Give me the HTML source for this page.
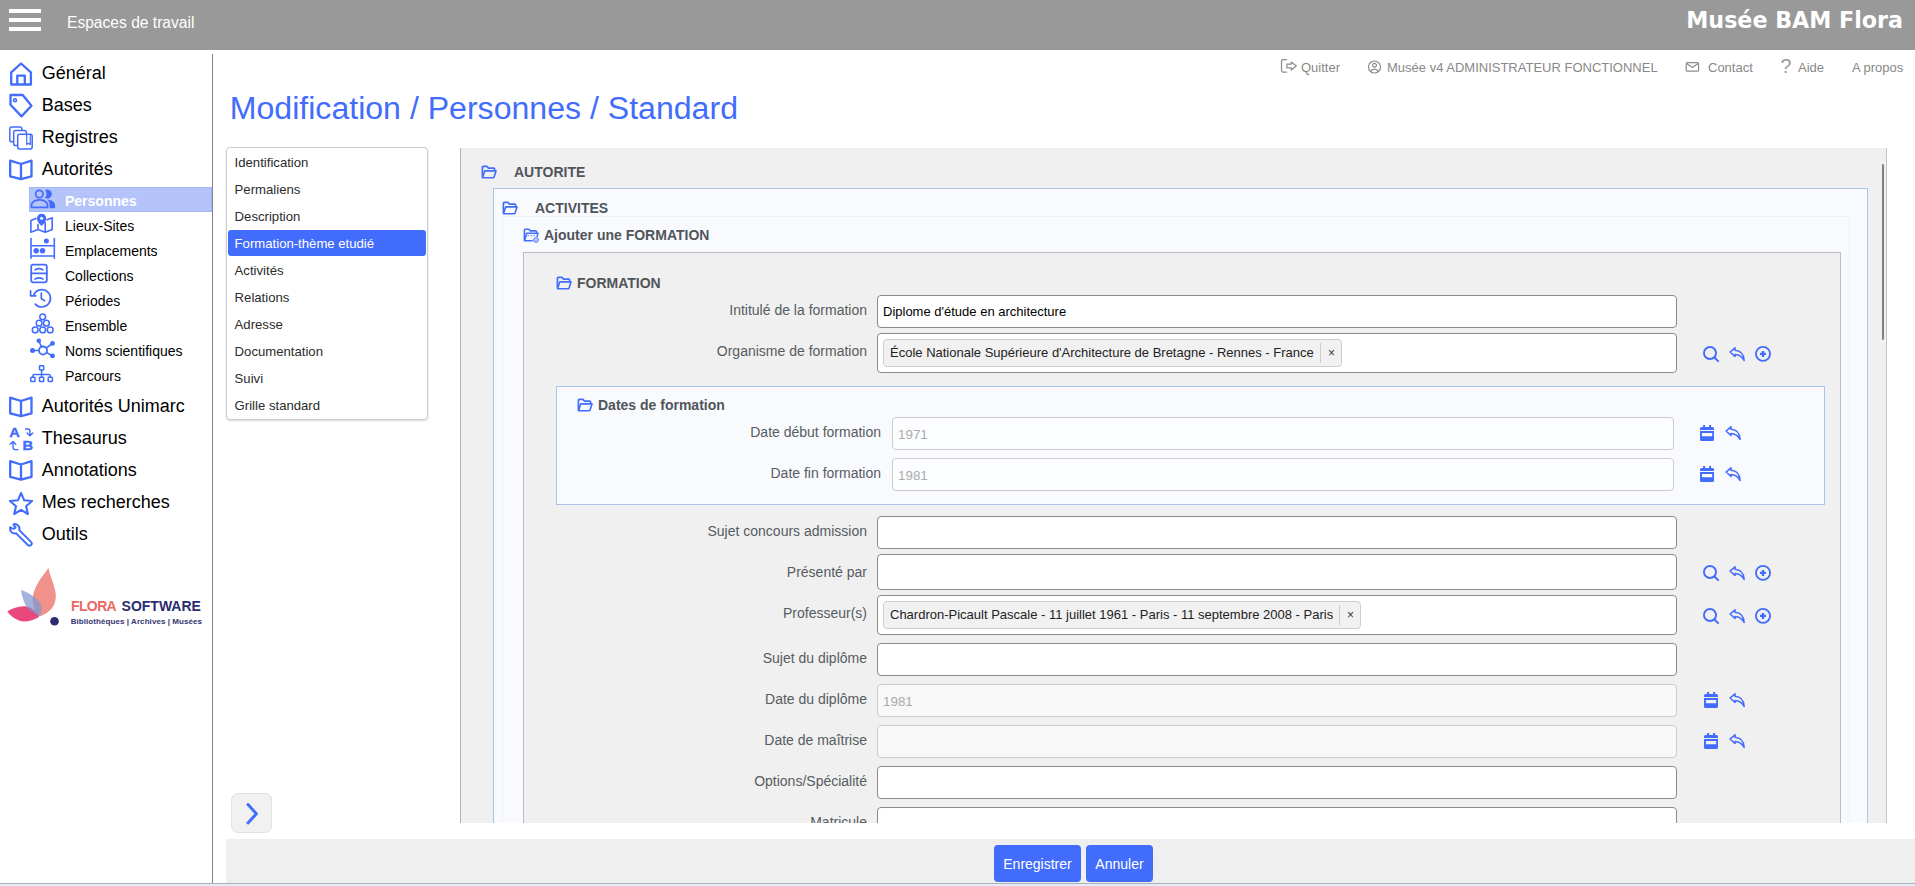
<!DOCTYPE html>
<html lang="fr"><head><meta charset="utf-8"><title>Modification / Personnes / Standard</title>
<style>
*{box-sizing:border-box}
html,body{margin:0;padding:0}
body{width:1915px;height:886px;position:relative;overflow:hidden;background:#fff;font-family:"Liberation Sans",sans-serif;color:#000}
.a{position:absolute;white-space:nowrap}
.ic{position:absolute;color:#426cfb;overflow:visible}
#top{left:0;top:0;width:1915px;height:49.5px;background:#999}
.hb{left:9px;width:32px;height:4px;background:#fff}
.m1{left:41.7px;font-size:18px;line-height:20px}
.m2{left:65px;font-size:14px;line-height:16px}
.hl{font-size:13px;line-height:16px;color:#888;top:60px}
.nv{left:234.600px;font-size:13.150px;line-height:16px;color:#2b2b2b}
.box{position:absolute;border:1px solid}
.h{font-weight:700;font-size:14px;line-height:16px;color:#50555a}
.lb{font-size:14px;line-height:16px;color:#565c62;text-align:right;width:300px}
.in{position:absolute;left:877px;width:800px;height:33px;border:1px solid #8a8a8a;border-radius:4px;background:#fff}
.din{position:absolute;height:33px;border:1px solid #ccc;border-radius:4px;background:rgba(255,255,255,.5)}
.tag{position:absolute;height:28px;border:1px solid #ccc;border-radius:4px;background:#f1f1f1;font-size:13px;line-height:26px;color:#222;white-space:nowrap}
.btn{position:absolute;top:845px;height:37px;background:#426cfb;color:#fff;border-radius:4px;font-size:14px;line-height:39px;text-align:center}
</style></head>
<body>
<div id="top" class="a"></div>
<div class="a hb" style="top:9px"></div>
<div class="a hb" style="top:18px"></div>
<div class="a hb" style="top:27px"></div>
<div class="a" style="left:67px;top:12.500px;font-size:15.600px;line-height:20px;color:#fff">Espaces de travail</div>
<div class="a" style="right:12px;top:6px;font-family:'DejaVu Sans',sans-serif;font-weight:700;font-size:22.200px;line-height:28px;color:#fff">Musée BAM Flora</div>
<div class="a" style="left:212px;top:54px;width:1px;height:829px;background:#858585"></div>
<div class="a m1" style="top:63px">Général</div>
<div class="a m1" style="top:95px">Bases</div>
<div class="a m1" style="top:127px">Registres</div>
<div class="a m1" style="top:159px">Autorités</div>
<div class="a m1" style="top:396px">Autorités Unimarc</div>
<div class="a m1" style="top:428px">Thesaurus</div>
<div class="a m1" style="top:460px">Annotations</div>
<div class="a m1" style="top:492px">Mes recherches</div>
<div class="a m1" style="top:524px">Outils</div>
<div class="a" style="left:29px;top:187px;width:183px;height:25px;background:#b4c4fb;border:1px solid #a3b6fa"></div>
<div class="a m2" style="top:193px;color:#fff;font-weight:700;">Personnes</div>
<div class="a m2" style="top:218px;">Lieux-Sites</div>
<div class="a m2" style="top:243px;">Emplacements</div>
<div class="a m2" style="top:268px;">Collections</div>
<div class="a m2" style="top:293px;">Périodes</div>
<div class="a m2" style="top:318px;">Ensemble</div>
<div class="a m2" style="top:343px;">Noms scientifiques</div>
<div class="a m2" style="top:368px;">Parcours</div>
<svg class="a" style="left:0;top:0" width="212" height="640" viewBox="0 0 212 640"><path d="M11.2 84.5V72.3L21 63.5L30.9 72.3V84.5Z M17.3 84.5V75.6H24.8V84.5" fill="none" stroke="#426cfb" stroke-linecap="round" stroke-linejoin="round" stroke-width="2.3"/><path d="M10.500 95H22.700L31.500 105.800L21.500 116.400L10.500 104.800Z" fill="none" stroke="#426cfb" stroke-linecap="round" stroke-linejoin="round" stroke-width="2.300"/><circle cx="15" cy="100.200" r="1.500" fill="none" stroke="#426cfb" stroke-linecap="round" stroke-linejoin="round" stroke-width="1.600"/><rect x="9.8" y="127" width="12" height="14.8" rx="1.8" fill="#fff" stroke="#426cfb" stroke-width="1.5"/><rect x="13.7" y="130.4" width="12.7" height="15.1" rx="1.8" fill="#fff" stroke="#426cfb" stroke-width="1.5"/><rect x="17.7" y="134.3" width="14.5" height="14.6" rx="1.8" fill="#fff" stroke="#426cfb" stroke-width="1.5"/><path d="M26.7 134.6V144.6L28.5 143.2L30.3 144.6V134.6" fill="none" stroke="#426cfb" stroke-linecap="round" stroke-linejoin="round" stroke-width="1.2"/><path d="M10.2 160.6L21 164.0L31.5 160.6V176.4L21 179.2L10.2 176.4Z M21 164.0V179.2" fill="none" stroke="#426cfb" stroke-linecap="round" stroke-linejoin="round" stroke-width="2.3"/><path d="M10.2 397.6L21 401.0L31.5 397.6V413.4L21 416.2L10.2 413.4Z M21 401.0V416.2" fill="none" stroke="#426cfb" stroke-linecap="round" stroke-linejoin="round" stroke-width="2.3"/><path d="M10.2 461.1L21 464.5L31.5 461.1V476.9L21 479.7L10.2 476.9Z M21 464.5V479.7" fill="none" stroke="#426cfb" stroke-linecap="round" stroke-linejoin="round" stroke-width="2.3"/><circle cx="39.3" cy="194" r="3.7" fill="none" stroke="#426cfb" stroke-linecap="round" stroke-linejoin="round" stroke-width="1.7"/><path d="M45 190.300A4.400 4.400 0 1 1 45 197.700A5.600 5.600 0 0 0 45 190.300Z" fill="#426cfb"/><path d="M31.4 207.4V205.6C31.4 201.6 36 199.9 39.5 199.9C43 199.9 47.6 201.6 47.6 205.6V207.4Z" fill="none" stroke="#426cfb" stroke-linecap="round" stroke-linejoin="round" stroke-width="1.7"/><path d="M47.3 199.4C52 199.8 55.1 202 55.1 205.4V208.3H49.6V205.4C49.6 203 48.9 201 47.3 199.4Z" fill="#426cfb"/><path d="M36 218.4L30.9 220.4V232.2L38 229.5L45.2 232.2L52.2 229.5V217.7L47 219.7 M38 224.5V229.5 M45.2 222.5V232.2" fill="none" stroke="#426cfb" stroke-linecap="round" stroke-linejoin="round" stroke-width="1.6"/><path d="M41.6 226C38 222.6 37 220.6 37 218.3a4.600 4.600 0 0 1 9.200 0C46.200 220.600 45.200 222.600 41.600 226Z" fill="#426cfb"/><circle cx="41.6" cy="218.2" r="1.5" fill="#fff"/><path d="M31 238.6V258.2 M54.3 238.6V258.2 M31 245.7H54.3 M31 256H54.3" fill="none" stroke="#426cfb" stroke-linecap="round" stroke-linejoin="round" stroke-width="1.6"/><circle cx="46.4" cy="240.9" r="2.5" fill="#426cfb"/><circle cx="36.2" cy="250.8" r="2.7" fill="#426cfb"/><circle cx="42.5" cy="250.8" r="2.7" fill="#426cfb"/><rect x="31.2" y="264.6" width="15.6" height="17.7" rx="2" fill="none" stroke="#426cfb" stroke-linecap="round" stroke-linejoin="round" stroke-width="1.8"/><path d="M31.2 273.4H46.8 M35 269.9Q39 267.300 43 269.9 M35 279.1Q39 276.500 43 279.1" fill="none" stroke="#426cfb" stroke-linecap="round" stroke-linejoin="round" stroke-width="1.7"/><path d="M33.6 295.3A8.7 8.7 0 1 1 35.3 304.1 M30.6 290.8V295.8H35.8 M41.3 293.2V298.7L44.7 300.7" fill="none" stroke="#426cfb" stroke-linecap="round" stroke-linejoin="round" stroke-width="1.7"/><circle cx="42.7" cy="316.8" r="2.9" fill="none" stroke="#426cfb" stroke-linecap="round" stroke-linejoin="round" stroke-width="1.5"/><circle cx="39.1" cy="323.2" r="2.9" fill="none" stroke="#426cfb" stroke-linecap="round" stroke-linejoin="round" stroke-width="1.5"/><circle cx="46.4" cy="323.2" r="2.9" fill="none" stroke="#426cfb" stroke-linecap="round" stroke-linejoin="round" stroke-width="1.5"/><circle cx="35.2" cy="329.9" r="2.9" fill="none" stroke="#426cfb" stroke-linecap="round" stroke-linejoin="round" stroke-width="1.5"/><circle cx="42.7" cy="329.9" r="2.9" fill="none" stroke="#426cfb" stroke-linecap="round" stroke-linejoin="round" stroke-width="1.5"/><circle cx="50.2" cy="329.9" r="2.9" fill="none" stroke="#426cfb" stroke-linecap="round" stroke-linejoin="round" stroke-width="1.5"/><path d="M43 350.5L38.8 340.8 M43 350.5L52.5 343.4 M43 350.5H32.5 M43 350.5L52.5 355.9" fill="none" stroke="#426cfb" stroke-linecap="round" stroke-linejoin="round" stroke-width="1.6"/><circle cx="43" cy="350.5" r="4" fill="#fff" stroke="#426cfb" stroke-width="1.8"/><circle cx="38.8" cy="340.8" r="2.3" fill="#426cfb"/><circle cx="52.5" cy="343.4" r="2.4" fill="#426cfb"/><circle cx="32.5" cy="350.5" r="2.5" fill="#426cfb"/><circle cx="52.5" cy="355.9" r="2.4" fill="#426cfb"/><rect x="39.5" y="365.7" width="4.2" height="4.2" rx=".6" fill="none" stroke="#426cfb" stroke-linecap="round" stroke-linejoin="round" stroke-width="1.5"/><rect x="30.8" y="377.3" width="4.2" height="4.2" rx=".6" fill="none" stroke="#426cfb" stroke-linecap="round" stroke-linejoin="round" stroke-width="1.5"/><rect x="39.5" y="377.3" width="4.2" height="4.2" rx=".6" fill="none" stroke="#426cfb" stroke-linecap="round" stroke-linejoin="round" stroke-width="1.5"/><rect x="48.2" y="377.3" width="4.2" height="4.2" rx=".6" fill="none" stroke="#426cfb" stroke-linecap="round" stroke-linejoin="round" stroke-width="1.5"/><path d="M41.6 370V377 M32.9 377V376Q32.9 374.4 34.5 374.4H48.7Q50.3 374.4 50.3 376V377" fill="none" stroke="#426cfb" stroke-linecap="round" stroke-linejoin="round" stroke-width="1.5"/><text x="9.2" y="437.1" style="font-family:Liberation Sans,sans-serif;font-weight:700;font-size:13.5px" fill="#426cfb" stroke="#426cfb" stroke-width=".35" textLength="10.6" lengthAdjust="spacingAndGlyphs">A</text><text x="22.6" y="450.3" style="font-family:Liberation Sans,sans-serif;font-weight:700;font-size:13.5px" fill="#426cfb" stroke="#426cfb" stroke-width=".35" textLength="10.6" lengthAdjust="spacingAndGlyphs">B</text><path d="M25.6 429H28Q29.9 429 29.9 431V435.4 M27.1 433L29.9 435.8L32.7 433" fill="none" stroke="#426cfb" stroke-linecap="round" stroke-linejoin="round" stroke-width="1.4"/><path d="M13 441.6V447.2Q13 449.600 15.500 449.600H18 M10.200 444.300L13 441.500L15.800 444.300" fill="none" stroke="#426cfb" stroke-linecap="round" stroke-linejoin="round" stroke-width="1.4"/><path d="M21.1 493.0L24.2 500.3L32.1 501.0L26.1 506.2L27.9 514.0L21.1 509.9L14.2 514.0L16.0 506.2L10.0 501.0L17.9 500.3Z" fill="none" stroke="#426cfb" stroke-linecap="round" stroke-linejoin="round" stroke-width="2.1"/><g><circle cx="14.8" cy="528.8" r="5.7" fill="#426cfb"/><path d="M15 529L29.400 543.400" stroke="#426cfb" stroke-width="6.4" stroke-linecap="round"/><circle cx="14.8" cy="528.8" r="3.6" fill="#fff"/><path d="M15 529L29.400 543.400" stroke="#fff" stroke-width="2.6" stroke-linecap="round"/><path d="M14.3 528.3L7 521" stroke="#fff" stroke-width="5" /><path d="M10.300 527.200Q13.500 530 15.700 527.600L13.400 524.800" fill="none" stroke="#426cfb" stroke-linecap="round" stroke-linejoin="round" stroke-width="1.9"/></g></svg>
<svg class="a" style="left:0;top:560px" width="70" height="75" viewBox="0 560 70 75"><path d="M48.5 568.1C44 575 31 588 33 603C34 610 37 614 40 616.3C50 613 56.500 605 55.800 595C55 585 50 577 48.500 568.100Z" fill="#f0918a"/><path d="M7.300 611.400C14 607 24 604.500 30 607.500C35 610 38 613.500 39.300 616.700C33 620.500 25 623 19 620.500C14 618.500 10 615 7.300 611.400Z" fill="#e8487b"/><path d="M21.100 589.800C27 592 36 597 40 603C42.500 607 42 612 39.900 616.100C34 614 27 609 24.500 603C22.500 598 21.500 594 21.100 589.800Z" fill="#7f96cf" fill-opacity=".72"/><circle cx="54.5" cy="621.2" r="4.3" fill="#2b2c6f"/></svg>
<div class="a" style="left:71px;top:597.600px;font-size:14px;line-height:16px;font-weight:700;color:#e96a63;letter-spacing:-.62px">FLORA</div>
<div class="a" style="left:121.600px;top:597.600px;font-size:14px;line-height:16px;font-weight:700;color:#2b2c6f">SOFTWARE</div>
<div class="a" style="left:70.700px;top:617px;font-size:8px;line-height:10px;font-weight:700;color:#33346f;letter-spacing:.07px">Bibliothèques | Archives | Musées</div>
<div class="a hl" style="left:1301px">Quitter</div>
<div class="a hl" style="left:1387px">Musée v4 ADMINISTRATEUR FONCTIONNEL</div>
<div class="a hl" style="left:1708px">Contact</div>
<div class="a hl" style="left:1798px">Aide</div>
<div class="a hl" style="left:1852px">A propos</div>
<div class="a" style="left:1780.500px;top:55px;font-size:19.500px;line-height:22px;color:#999">?</div>
<svg class="a" style="left:1270px;top:50px" width="440" height="30" viewBox="1270 50 440 30"><path d="M1286.6 59.6H1283a1.500 1.500 0 0 0-1.500 1.500V70.600a1.500 1.500 0 0 0 1.500 1.500H1286.600" fill="none" stroke="#8c8c8c" stroke-linecap="round" stroke-linejoin="round" stroke-width="1.2"/><path d="M1286.9 64.2H1291.300V62L1296.300 66L1291.300 70V67.800H1286.900Z" fill="none" stroke="#8c8c8c" stroke-linecap="round" stroke-linejoin="round" stroke-width="1.2"/><circle cx="1374.5" cy="67" r="6" fill="none" stroke="#8c8c8c" stroke-linecap="round" stroke-linejoin="round" stroke-width="1.2"/><circle cx="1374.5" cy="65.3" r="1.9" fill="none" stroke="#8c8c8c" stroke-linecap="round" stroke-linejoin="round" stroke-width="1.2"/><path d="M1370.6 71.4C1371.600 69.600 1373 69.100 1374.500 69.100C1376 69.100 1377.400 69.600 1378.400 71.400" fill="none" stroke="#8c8c8c" stroke-linecap="round" stroke-linejoin="round" stroke-width="1.2"/><rect x="1686.2" y="62.6" width="12.4" height="8.6" rx="1.3" fill="none" stroke="#8c8c8c" stroke-linecap="round" stroke-linejoin="round" stroke-width="1.2"/><path d="M1686.6 63.6L1692.400 67.600L1698.200 63.600" fill="none" stroke="#8c8c8c" stroke-linecap="round" stroke-linejoin="round" stroke-width="1.2"/></svg>
<div class="a" style="left:229.800px;top:89px;font-size:32.100px;line-height:38px;color:#426cfb">Modification / Personnes / Standard</div>
<div class="box" style="left:226px;top:147px;width:202px;height:273px;border-color:#ccc;border-radius:4px;box-shadow:0 1px 2px rgba(0,0,0,.15);background:#fff"></div>
<div class="a" style="left:228px;top:230px;width:198px;height:26px;background:#426cfb;border-radius:3px"></div>
<div class="a nv" style="top:155px;">Identification</div>
<div class="a nv" style="top:182px;">Permaliens</div>
<div class="a nv" style="top:209px;">Description</div>
<div class="a nv" style="top:236px;color:#fff;">Formation-thème etudié</div>
<div class="a nv" style="top:263px;">Activités</div>
<div class="a nv" style="top:290px;">Relations</div>
<div class="a nv" style="top:317px;">Adresse</div>
<div class="a nv" style="top:344px;">Documentation</div>
<div class="a nv" style="top:371px;">Suivi</div>
<div class="a nv" style="top:398px;">Grille standard</div>
<div class="box" style="left:231px;top:793px;width:41px;height:40px;border-color:#e2e2e2;border-radius:7px;background:#f1f1f1"></div>
<svg class="ic" style="left:245px;top:800px" width="13" height="26" viewBox="0 0 13 26" ><path d="M3 4.600L11.400 13.800L3 23" fill="none" stroke="#426cfb" stroke-width="3" stroke-linecap="round" stroke-linejoin="round"/></svg>
<div class="a" id="main" style="left:460px;top:148px;width:1427px;height:675px;background:#f0f0f0;border-left:1px solid #b4b4b4;border-right:1px solid #c4c4c4;overflow:hidden"></div>
<div class="box" style="left:493px;top:188px;width:1375px;height:635px;border-color:#a9c3ea;border-bottom:0;background:#f9fafe"></div>
<div class="box" style="left:502px;top:216px;width:1348px;height:607px;border-color:#eef1f8;border-bottom:0;background:#f9fafe"></div>
<div class="box" style="left:523px;top:252px;width:1318px;height:571px;border-color:#bdbdbd;border-bottom:0;background:#f0f0f0"></div>
<div class="box" style="left:556px;top:386px;width:1269px;height:119px;border-color:#a9c3ea;background:#f9fafe"></div>
<div class="a" style="left:1882px;top:164px;width:2px;height:176px;background:#808080;border-radius:1px"></div>
<svg class="ic" style="left:481px;top:165px" width="16" height="14" viewBox="0 0 16 14" ><path d="M1.4 12.2V2.4a1 1 0 0 1 1-1H5.900L7.500 3.100H12.600a1 1 0 0 1 1 1V5.600" fill="none" stroke="currentColor" stroke-width="1.7" stroke-linejoin="round"/><path d="M1.500 12.700L3.700 5.900H15L13.100 12a1 1 0 0 1-.95.700Z" fill="none" stroke="currentColor" stroke-width="1.6" stroke-linejoin="round"/></svg>
<div class="a h" style="left:514px;top:164px">AUTORITE</div>
<svg class="ic" style="left:502px;top:201px" width="16" height="14" viewBox="0 0 16 14" ><path d="M1.4 12.2V2.4a1 1 0 0 1 1-1H5.900L7.500 3.100H12.600a1 1 0 0 1 1 1V5.600" fill="none" stroke="currentColor" stroke-width="1.7" stroke-linejoin="round"/><path d="M1.500 12.700L3.700 5.900H15L13.100 12a1 1 0 0 1-.95.700Z" fill="none" stroke="currentColor" stroke-width="1.6" stroke-linejoin="round"/></svg>
<div class="a h" style="left:535px;top:200px">ACTIVITES</div>
<svg class="ic" style="left:523px;top:228px" width="16" height="15" viewBox="0 0 16 15" ><path d="M1.400 12.200V2.300a1 1 0 0 1 1-1H5.800L7.400 2.900H12.600a1 1 0 0 1 1 1V5" fill="none" stroke="currentColor" stroke-width="1.600" stroke-linejoin="round"/><path d="M1.500 12.700L3.600 5.300H15L13.100 12a1 1 0 0 1-.95.700Z" fill="none" stroke="currentColor" stroke-width="1.500" stroke-linejoin="round"/><path d="M4.500 7.700h1.400M7.500 7.700h1.400M10.500 7.700h1.400" stroke="currentColor" stroke-width="1"/><circle cx="13" cy="12" r="3.300" fill="#f9fafe"/><circle cx="13" cy="12" r="2.300" fill="#dde6ff" stroke="currentColor" stroke-width="1"/><path d="M12.200 11.700L13 12.600L13.800 11.700" fill="none" stroke="currentColor" stroke-width=".7"/></svg>
<div class="a h" style="left:544px;top:227px">Ajouter une FORMATION</div>
<svg class="ic" style="left:556px;top:276px" width="16" height="14" viewBox="0 0 16 14" ><path d="M1.4 12.2V2.4a1 1 0 0 1 1-1H5.900L7.500 3.100H12.600a1 1 0 0 1 1 1V5.600" fill="none" stroke="currentColor" stroke-width="1.7" stroke-linejoin="round"/><path d="M1.500 12.700L3.700 5.900H15L13.100 12a1 1 0 0 1-.95.700Z" fill="none" stroke="currentColor" stroke-width="1.6" stroke-linejoin="round"/></svg>
<div class="a h" style="left:577px;top:275px">FORMATION</div>
<svg class="ic" style="left:577px;top:398px" width="16" height="14" viewBox="0 0 16 14" ><path d="M1.4 12.2V2.4a1 1 0 0 1 1-1H5.900L7.500 3.100H12.600a1 1 0 0 1 1 1V5.600" fill="none" stroke="currentColor" stroke-width="1.7" stroke-linejoin="round"/><path d="M1.500 12.700L3.700 5.900H15L13.100 12a1 1 0 0 1-.95.700Z" fill="none" stroke="currentColor" stroke-width="1.6" stroke-linejoin="round"/></svg>
<div class="a h" style="left:598px;top:397px">Dates de formation</div>
<div class="a lb" style="left:567px;top:302px">Intitulé de la formation</div>
<div class="in" style="top:295px;height:33px"></div>
<div class="a" style="left:883px;top:304px;font-size:13px;line-height:16px;color:#000">Diplome d'étude en architecture</div>
<div class="a lb" style="left:567px;top:343px">Organisme de formation</div>
<div class="in" style="top:333px;height:40px"></div>
<div class="tag" style="left:883px;top:339px;width:459px;padding-left:6px">École Nationale Supérieure d'Architecture de Bretagne - Rennes - France<span style="position:absolute;right:20px;top:3px;bottom:3px;width:1px;background:#ccc"></span><span style="position:absolute;right:6px;top:0;font-size:12px;color:#333">×</span></div>
<svg class="ic" style="left:1703px;top:346px" width="16" height="16" viewBox="0 0 16 16" ><circle cx="7" cy="7" r="6.050" fill="none" stroke="currentColor" stroke-width="1.900"/><path d="M11.500 11.500L15.100 15.100" stroke="currentColor" stroke-width="2" stroke-linecap="round"/></svg>
<svg class="ic" style="left:1729px;top:346px" width="16" height="16" viewBox="0 0 16 16" ><path d="M1.100 6L6 1.800V4.300C11.500 4.600 14.800 8.500 15.100 14.500C13.300 11 10.500 8.600 6 8.500V10.500Z" fill="none" stroke="currentColor" stroke-width="1.600" stroke-linejoin="round"/></svg>
<svg class="ic" style="left:1755px;top:346px" width="16" height="16" viewBox="0 0 16 16" ><circle cx="8" cy="7.900" r="7.050" fill="none" stroke="currentColor" stroke-width="1.800"/><path d="M8 4.900V10.900M5 7.900H11" stroke="currentColor" stroke-width="2.300"/></svg>
<div class="a lb" style="left:581px;top:424px">Date début formation</div>
<div class="din" style="left:892px;top:417px;width:782px"></div>
<div class="a" style="left:898px;top:427px;font-size:13.400px;line-height:16px;color:#aaa">1971</div>
<svg class="ic" style="left:1700px;top:425px" width="14" height="16" viewBox="0 0 14 16" ><path fill="currentColor" fill-rule="evenodd" d="M3.100 0h2v2.100h4V0h2v2.100h1.400a1.500 1.500 0 0 1 1.500 1.500V5H0V3.600a1.500 1.500 0 0 1 1.500-1.500h1.600zM0 6.100h14v8.300a1.500 1.500 0 0 1-1.500 1.500h-11a1.500 1.500 0 0 1-1.500-1.500zM1.900 8v3.150h10.300V8z"/></svg>
<svg class="ic" style="left:1725px;top:425px" width="16" height="16" viewBox="0 0 16 16" ><path d="M1.100 6L6 1.800V4.300C11.500 4.600 14.800 8.500 15.100 14.500C13.300 11 10.500 8.600 6 8.500V10.500Z" fill="none" stroke="currentColor" stroke-width="1.600" stroke-linejoin="round"/></svg>
<div class="a lb" style="left:581px;top:465px">Date fin formation</div>
<div class="din" style="left:892px;top:458px;width:782px"></div>
<div class="a" style="left:898px;top:468px;font-size:13.400px;line-height:16px;color:#aaa">1981</div>
<svg class="ic" style="left:1700px;top:466px" width="14" height="16" viewBox="0 0 14 16" ><path fill="currentColor" fill-rule="evenodd" d="M3.100 0h2v2.100h4V0h2v2.100h1.400a1.500 1.500 0 0 1 1.500 1.500V5H0V3.600a1.500 1.500 0 0 1 1.500-1.500h1.600zM0 6.100h14v8.300a1.500 1.500 0 0 1-1.500 1.500h-11a1.500 1.500 0 0 1-1.500-1.500zM1.900 8v3.150h10.300V8z"/></svg>
<svg class="ic" style="left:1725px;top:466px" width="16" height="16" viewBox="0 0 16 16" ><path d="M1.100 6L6 1.800V4.300C11.500 4.600 14.800 8.500 15.100 14.500C13.300 11 10.500 8.600 6 8.500V10.500Z" fill="none" stroke="currentColor" stroke-width="1.600" stroke-linejoin="round"/></svg>
<div class="a lb" style="left:567px;top:523px">Sujet concours admission</div>
<div class="in" style="top:516px;height:33px"></div>
<div class="a lb" style="left:567px;top:564px">Présenté par</div>
<div class="in" style="top:554px;height:36px"></div>
<svg class="ic" style="left:1703px;top:565px" width="16" height="16" viewBox="0 0 16 16" ><circle cx="7" cy="7" r="6.050" fill="none" stroke="currentColor" stroke-width="1.900"/><path d="M11.500 11.500L15.100 15.100" stroke="currentColor" stroke-width="2" stroke-linecap="round"/></svg>
<svg class="ic" style="left:1729px;top:565px" width="16" height="16" viewBox="0 0 16 16" ><path d="M1.100 6L6 1.800V4.300C11.500 4.600 14.800 8.500 15.100 14.500C13.300 11 10.500 8.600 6 8.500V10.500Z" fill="none" stroke="currentColor" stroke-width="1.600" stroke-linejoin="round"/></svg>
<svg class="ic" style="left:1755px;top:565px" width="16" height="16" viewBox="0 0 16 16" ><circle cx="8" cy="7.900" r="7.050" fill="none" stroke="currentColor" stroke-width="1.800"/><path d="M8 4.900V10.900M5 7.900H11" stroke="currentColor" stroke-width="2.300"/></svg>
<div class="a lb" style="left:567px;top:605px">Professeur(s)</div>
<div class="in" style="top:595px;height:40px"></div>
<div class="tag" style="left:883px;top:601px;width:478px;padding-left:6px">Chardron-Picault Pascale - 11 juillet 1961 - Paris - 11 septembre 2008 - Paris<span style="position:absolute;right:20px;top:3px;bottom:3px;width:1px;background:#ccc"></span><span style="position:absolute;right:6px;top:0;font-size:12px;color:#333">×</span></div>
<svg class="ic" style="left:1703px;top:608px" width="16" height="16" viewBox="0 0 16 16" ><circle cx="7" cy="7" r="6.050" fill="none" stroke="currentColor" stroke-width="1.900"/><path d="M11.500 11.500L15.100 15.100" stroke="currentColor" stroke-width="2" stroke-linecap="round"/></svg>
<svg class="ic" style="left:1729px;top:608px" width="16" height="16" viewBox="0 0 16 16" ><path d="M1.100 6L6 1.800V4.300C11.500 4.600 14.800 8.500 15.100 14.500C13.300 11 10.500 8.600 6 8.500V10.500Z" fill="none" stroke="currentColor" stroke-width="1.600" stroke-linejoin="round"/></svg>
<svg class="ic" style="left:1755px;top:608px" width="16" height="16" viewBox="0 0 16 16" ><circle cx="8" cy="7.900" r="7.050" fill="none" stroke="currentColor" stroke-width="1.800"/><path d="M8 4.900V10.900M5 7.900H11" stroke="currentColor" stroke-width="2.300"/></svg>
<div class="a lb" style="left:567px;top:650px">Sujet du diplôme</div>
<div class="in" style="top:643px;height:33px"></div>
<div class="a lb" style="left:567px;top:691px">Date du diplôme</div>
<div class="din" style="left:877px;top:684px;width:800px"></div>
<div class="a" style="left:883px;top:694px;font-size:13.400px;line-height:16px;color:#aaa">1981</div>
<svg class="ic" style="left:1704px;top:692px" width="14" height="16" viewBox="0 0 14 16" ><path fill="currentColor" fill-rule="evenodd" d="M3.100 0h2v2.100h4V0h2v2.100h1.400a1.500 1.500 0 0 1 1.500 1.500V5H0V3.600a1.500 1.500 0 0 1 1.500-1.500h1.600zM0 6.100h14v8.300a1.500 1.500 0 0 1-1.500 1.500h-11a1.500 1.500 0 0 1-1.500-1.500zM1.900 8v3.150h10.300V8z"/></svg>
<svg class="ic" style="left:1729px;top:692px" width="16" height="16" viewBox="0 0 16 16" ><path d="M1.100 6L6 1.800V4.300C11.500 4.600 14.800 8.500 15.100 14.500C13.300 11 10.500 8.600 6 8.500V10.500Z" fill="none" stroke="currentColor" stroke-width="1.600" stroke-linejoin="round"/></svg>
<div class="a lb" style="left:567px;top:732px">Date de maîtrise</div>
<div class="din" style="left:877px;top:725px;width:800px"></div>
<svg class="ic" style="left:1704px;top:733px" width="14" height="16" viewBox="0 0 14 16" ><path fill="currentColor" fill-rule="evenodd" d="M3.100 0h2v2.100h4V0h2v2.100h1.400a1.500 1.500 0 0 1 1.500 1.500V5H0V3.600a1.500 1.500 0 0 1 1.500-1.500h1.600zM0 6.100h14v8.300a1.500 1.500 0 0 1-1.500 1.500h-11a1.500 1.500 0 0 1-1.500-1.500zM1.900 8v3.150h10.300V8z"/></svg>
<svg class="ic" style="left:1729px;top:733px" width="16" height="16" viewBox="0 0 16 16" ><path d="M1.100 6L6 1.800V4.300C11.500 4.600 14.800 8.500 15.100 14.500C13.300 11 10.500 8.600 6 8.500V10.500Z" fill="none" stroke="currentColor" stroke-width="1.600" stroke-linejoin="round"/></svg>
<div class="a lb" style="left:567px;top:773px">Options/Spécialité</div>
<div class="in" style="top:766px;height:33px"></div>
<div class="a lb" style="left:567px;top:814px">Matricule</div>
<div class="in" style="top:807px;height:33px"></div>
<div class="a" style="left:213px;top:823px;width:1702px;height:63px;background:#fff"></div>
<div class="box" style="left:231px;top:793px;width:41px;height:40px;border-color:#e2e2e2;border-radius:7px;background:#f1f1f1"></div>
<svg class="ic" style="left:245px;top:800px" width="13" height="26" viewBox="0 0 13 26" ><path d="M3 4.600L11.400 13.800L3 23" fill="none" stroke="#426cfb" stroke-width="3" stroke-linecap="round" stroke-linejoin="round"/></svg>
<div class="a" style="left:226px;top:839px;width:1689px;height:44px;background:#efefef"></div>
<div class="btn" style="left:994px;width:87px">Enregistrer</div>
<div class="btn" style="left:1086px;width:67px">Annuler</div>
<div class="a" style="left:0;top:883px;width:1915px;height:1px;background:#a9b0b8"></div>
<div class="a" style="left:0;top:884px;width:1915px;height:2px;background:#e3ecf8"></div>
</body></html>
